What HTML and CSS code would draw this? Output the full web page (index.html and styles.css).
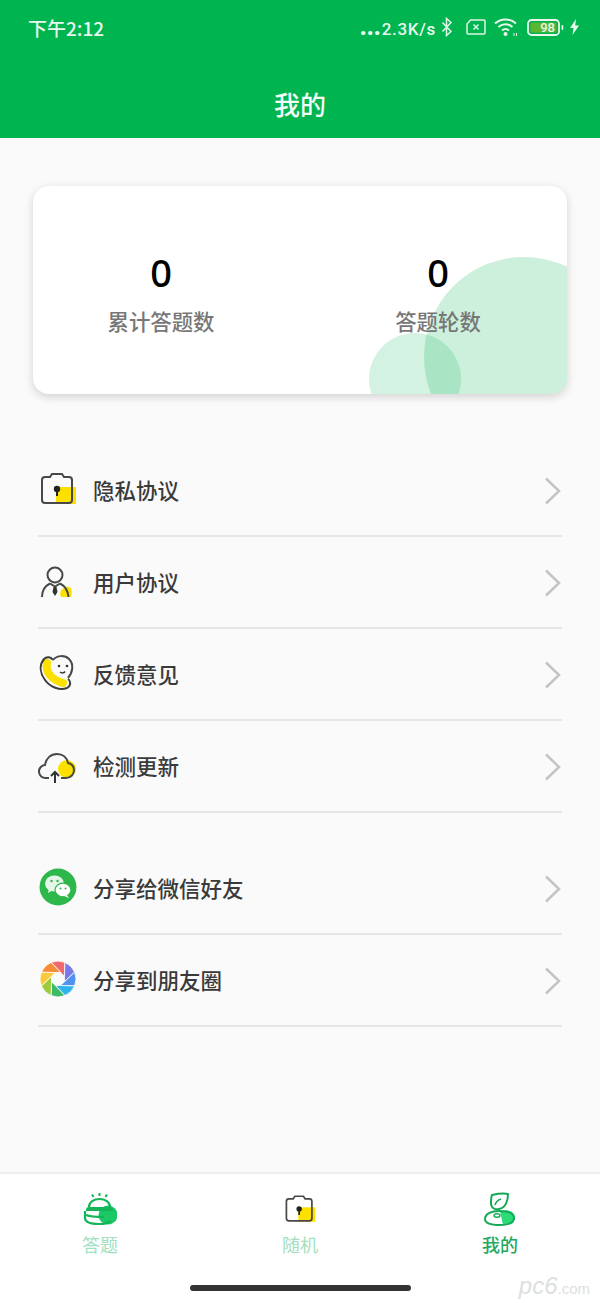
FILE: index.html
```html
<!DOCTYPE html>
<html lang="zh-CN">
<head>
    <meta charset="UTF-8">
    <meta name="viewport" content="width=device-width, initial-scale=1.0">
    <title>我的</title>
    <link rel="stylesheet" href="styles.css">
</head>
<body>
    <svg class="sprites" width="0" height="0">
        <symbol id="icon-lock" viewBox="0 0 40 40">
            <rect x="18" y="18" width="20" height="17" fill="#fbe000"/>
            <path d="M7 8h5l2-3h10l2 3h5a3 3 0 0 1 3 3v20a3 3 0 0 1-3 3H7a3 3 0 0 1-3-3V11a3 3 0 0 1 3-3z" fill="none" stroke="#484848" stroke-width="2"/>
            <circle cx="19" cy="20" r="3.2" fill="#222"/>
            <path d="M19 21v6" stroke="#222" stroke-width="2"/>
        </symbol>
    </svg>

    <header class="top-bar">
        <div class="status-bar">
            <span class="status-time">下午2:12</span>
            <div class="status-right">
                <span class="status-speed"><b class="status-dots">...</b>2.3K/s</span>
                <svg class="st-bt" width="12" height="20" viewBox="0 0 12 20"><path d="M1.5 5.5l8.5 9-4.5 4V1.5l4.500 4-8.500 9" fill="none" stroke="#dff5e7" stroke-width="1.500"/></svg>
                <svg class="st-sim" width="20" height="16" viewBox="0 0 20 16"><path d="M4.500 1H18a1 1 0 0 1 1 1v12a1 1 0 0 1-1 1H2a1 1 0 0 1-1-1V5z" fill="none" stroke="#dff5e7" stroke-width="1.500"/><path d="M7.500 5.500l5 5m0-5l-5 5" stroke="#dff5e7" stroke-width="1.500"/></svg>
                <svg class="st-wifi" width="25" height="20" viewBox="0 0 25 20"><path d="M1 6.500a15.500 15.500 0 0 1 21 0M4.500 10a10.500 10.500 0 0 1 14 0M8 13.500a5.500 5.500 0 0 1 7 0" fill="none" stroke="#e8f8ee" stroke-width="2"/><circle cx="11.500" cy="17" r="2" fill="#e8f8ee"/><path d="M20 16v3m2.500-3v3" stroke="#dff5e7" stroke-width="1"/></svg>
                <svg class="st-battery" width="37" height="17" viewBox="0 0 37 17"><rect x="1" y="1" width="31" height="15" rx="3.500" fill="none" stroke="#e8f8ee" stroke-width="1.800"/><rect x="3.500" y="3.500" width="26" height="10" rx="1.500" fill="#5cb531"/><rect x="34.500" y="6" width="1.800" height="5" rx=".9" fill="#e8f8ee"/></svg>
                <span class="battery-num">98</span>
                <svg class="st-bolt" width="11" height="16" viewBox="0 0 11 16"><path d="M7 0L1 9h3.500L3.500 16 10 6.500H6.200z" fill="#e8f8ee"/></svg>
            </div>
        </div>
        <h1 class="page-title">我的</h1>
    </header>

    <main class="content">
        <section class="stats-card">
            <span class="blob blob-big"></span>
            <span class="blob blob-small"></span>
            <div class="stat">
                <div class="stat-num">0</div>
                <div class="stat-label">累计答题数</div>
            </div>
            <div class="stat">
                <div class="stat-num">0</div>
                <div class="stat-label">答题轮数</div>
            </div>
        </section>

        <ul class="menu">
            <li class="menu-row">
                <svg class="row-icon" viewBox="0 0 40 40"><use href="#icon-lock"/></svg>
                <span class="row-text">隐私协议</span>
                <svg class="chevron" width="17" height="28" viewBox="0 0 17 28"><path d="M2 1.500L15 14 2 26.500" fill="none" stroke="#c4c4c4" stroke-width="2.500"/></svg>
            </li>
            <li class="menu-row">
                <svg class="row-icon" viewBox="0 0 40 40">
                    <path d="M23 36a7 7 0 0 1 10-9c1 3 1 6 0 9z" fill="#fbe000"/>
                    <circle cx="17" cy="14" r="7.500" fill="none" stroke="#484848" stroke-width="2"/>
                    <path d="M4 36c0-6 3-11 8-13.500M22 22.500c5 2.500 8 7.500 8.500 13.500M12 22.500l5 3 5-3" fill="none" stroke="#484848" stroke-width="2"/>
                    <path d="M15.500 26h3l1 5-2.500 4-2.500-4z" fill="#333"/>
                </svg>
                <span class="row-text">用户协议</span>
                <svg class="chevron" width="17" height="28" viewBox="0 0 17 28"><path d="M2 1.500L15 14 2 26.500" fill="none" stroke="#c4c4c4" stroke-width="2.500"/></svg>
            </li>
            <li class="menu-row">
                <svg class="row-icon" viewBox="0 0 40 40">
                    <path d="M9 10C7 18 13 27 25 30" fill="none" stroke="#fbe000" stroke-width="8" stroke-linecap="round"/>
                    <path d="M6 6c-5 6-4 14 1 21 5 7 15 11 22 8 4-2 4-7 1-9M6 6c3-3 7-2 9 1" fill="none" stroke="#3c3c3c" stroke-width="2"/>
                    <path d="M15 7c4-5 12-5 16-1 5 5 4 13-1 19" fill="none" stroke="#484848" stroke-width="2"/>
                    <circle cx="21" cy="13" r="1.300" fill="#333"/>
                    <circle cx="29" cy="13" r="1.300" fill="#333"/>
                    <path d="M22 19c2 1.500 4 1 5-.5" fill="none" stroke="#333" stroke-width="1.500"/>
                </svg>
                <span class="row-text">反馈意见</span>
                <svg class="chevron" width="17" height="28" viewBox="0 0 17 28"><path d="M2 1.500L15 14 2 26.500" fill="none" stroke="#c4c4c4" stroke-width="2.500"/></svg>
            </li>
            <li class="menu-row">
                <svg class="row-icon" viewBox="0 0 40 40">
                    <circle cx="29" cy="24" r="9" fill="#fbe000"/>
                    <path d="M11 33H8a6.500 6.500 0 0 1-1-13c1-7 6-11 12-11 6 0 10 4 11 9 4 1 6 4 6 7 0 4-3 8-8 8h-5" fill="none" stroke="#484848" stroke-width="2"/>
                    <path d="M17 38V27m-4 4l4-4 4 4" fill="none" stroke="#333" stroke-width="2"/>
                </svg>
                <span class="row-text">检测更新</span>
                <svg class="chevron" width="17" height="28" viewBox="0 0 17 28"><path d="M2 1.500L15 14 2 26.500" fill="none" stroke="#c4c4c4" stroke-width="2.500"/></svg>
            </li>
            <li class="menu-row row-share">
                <svg class="row-icon" viewBox="0 0 40 40">
                    <circle cx="20" cy="20" r="18.500" fill="#2eb84b"/>
                    <ellipse cx="16.500" cy="16.500" rx="9.500" ry="8" fill="#e4f6e7"/>
                    <path d="M11 21l-1 5 5-3z" fill="#e4f6e7"/>
                    <ellipse cx="25" cy="23" rx="8" ry="6.800" fill="#fff" stroke="#2eb84b" stroke-width="1.200"/>
                    <path d="M29 28l2 3-5-2z" fill="#fff"/>
                    <circle cx="13.500" cy="14" r="1.200" fill="#2eb84b"/>
                    <circle cx="19.500" cy="14" r="1.200" fill="#2eb84b"/>
                    <circle cx="22.500" cy="21.500" r="1" fill="#2eb84b"/>
                    <circle cx="27.500" cy="21.500" r="1" fill="#2eb84b"/>
                </svg>
                <span class="row-text">分享给微信好友</span>
                <svg class="chevron" width="17" height="28" viewBox="0 0 17 28"><path d="M2 1.500L15 14 2 26.500" fill="none" stroke="#c4c4c4" stroke-width="2.500"/></svg>
            </li>
            <li class="menu-row">
                <svg class="row-icon" viewBox="0 0 40 40">
                    <g stroke="#fff" stroke-width=".8">
                        <path d="M13.100 3.400A18 18 0 0 1 26.900 3.400L26.500 17.300 22.700 13.500z" fill="#ef6a6f"/>
                        <path d="M26.900 3.400A18 18 0 0 1 36.600 13.100L26.500 22.700 26.500 17.300z" fill="#7b78e8"/>
                        <path d="M36.600 13.100A18 18 0 0 1 36.600 26.900L22.700 26.500 26.500 22.700z" fill="#4f93ee"/>
                        <path d="M36.600 26.900A18 18 0 0 1 26.900 36.600L17.300 26.500 22.700 26.500z" fill="#2fb4ec"/>
                        <path d="M26.900 36.600A18 18 0 0 1 13.100 36.600L13.500 22.700 17.300 26.500z" fill="#3dbb6a"/>
                        <path d="M13.100 36.600A18 18 0 0 1 3.400 26.900L13.500 17.300 13.500 22.700z" fill="#9ccb3b"/>
                        <path d="M3.400 26.900A18 18 0 0 1 3.400 13.100L17.300 13.500 13.500 17.300z" fill="#f8c93a"/>
                        <path d="M3.400 13.100A18 18 0 0 1 13.100 3.400L22.700 13.500 17.300 13.500z" fill="#f58b35"/>
                    </g>
                </svg>
                <span class="row-text">分享到朋友圈</span>
                <svg class="chevron" width="17" height="28" viewBox="0 0 17 28"><path d="M2 1.500L15 14 2 26.500" fill="none" stroke="#c4c4c4" stroke-width="2.500"/></svg>
            </li>
        </ul>
    </main>

    <nav class="tab-bar">
        <div class="tabs">
            <div class="tab">
                <svg class="tab-icon" viewBox="0 0 34 34">
                    <circle cx="25" cy="23" r="9.500" fill="#1cc765"/>
                    <path d="M6 15c0-5 5-8 10.500-8S27 10 27 15" fill="none" stroke="#14b558" stroke-width="2.200"/>
                    <path d="M3 18c0-2 1-3 3-3h21c2 0 3 1 3 3v1H3z" fill="#14b558"/>
                    <path d="M2 19v7c0 4 6 6 14 6 5 0 9-1 12-3" fill="none" stroke="#14b558" stroke-width="2.200"/>
                    <path d="M3 23c5 2 12 2 18 2" fill="none" stroke="#14b558" stroke-width="2"/>
                    <path d="M16.500 1v3M9 2.500l1.500 2.500M24 2.500L22.500 5" stroke="#14b558" stroke-width="2"/>
                </svg>
                <span class="tab-label">答题</span>
            </div>
            <div class="tab">
                <svg class="tab-icon" viewBox="0 0 40 40"><use href="#icon-lock"/></svg>
                <span class="tab-label">随机</span>
            </div>
            <div class="tab tab-active">
                <svg class="tab-icon" viewBox="0 0 34 34">
                    <path d="M17 19c7-2 14 0 15 6 0 5-5 8-12 8z" fill="#2bdc78"/>
                    <path d="M9 3c5-1 11-2 16-1 0 6-2 14-9 15-4 1-8-1-8-6 0-3 0-6 1-8z" fill="none" stroke="#14a958" stroke-width="2"/>
                    <path d="M12 13c1-3 3-5 6-6" fill="none" stroke="#14a958" stroke-width="1.600"/>
                    <path d="M2 27c0-5 6-8 14-8s15 2 15 7c0 5-6 7-14 7S2 32 2 27z" fill="none" stroke="#14a958" stroke-width="2"/>
                    <ellipse cx="14" cy="23.500" rx="3" ry="1.800" fill="#fff" stroke="#14a958" stroke-width="1.400"/>
                </svg>
                <span class="tab-label">我的</span>
            </div>
        </div>
        <div class="home-line"></div>
        <div class="watermark"><span class="wm-logo">pc6</span><span class="wm-sub">.com</span></div>
    </nav>
</body>
</html>
```

FILE: styles.css
```css
* {
    box-sizing: border-box;
}
html, body {
    margin: 0;
    padding: 0;
}
body {
    width: 600px;
    height: 1303px;
    display: flex;
    flex-direction: column;
    overflow: hidden;
    background-color: #fafafa;
    font-family: "Noto Sans CJK SC", "Noto Sans", sans-serif;
}
.sprites {
    position: absolute;
}

/* green header */
.top-bar {
    height: 138px;
    flex-shrink: 0;
    background-color: #00b44f;
    color: #fff;
}
.status-bar {
    height: 54px;
    display: flex;
    align-items: center;
    justify-content: space-between;
    padding: 0 20px 0 28px;
}
.status-time {
    font-size: 19px;
    font-weight: 500;
    color: #e8f8ee;
}
.status-right {
    position: relative;
    display: flex;
    align-items: center;
    color: #e8f8ee;
}
.status-speed {
    font-family: Roboto, sans-serif;
    font-size: 17px;
    font-weight: 500;
    letter-spacing: .7px;
}
.status-dots {
    font-size: 23px;
    line-height: 1;
    font-weight: 900;
    letter-spacing: 0;
    margin-right: 1px;
}
.st-bt {
    margin-left: 5px;
}
.st-sim {
    margin-left: 13px;
}
.st-wifi {
    margin-left: 8px;
}
.st-battery {
    margin-left: 8px;
}
.st-bolt {
    margin-left: 5px;
}
.battery-num {
    position: absolute;
    right: 25px;
    top: 50%;
    transform: translateY(-50%);
    font-family: Roboto, sans-serif;
    font-size: 13px;
    font-weight: 500;
    color: #e8f8ee;
}
.page-title {
    margin: 0;
    text-align: center;
    font-size: 26px;
    font-weight: 500;
    line-height: 36px;
    padding-top: 32px;
    color: #f2fbf5;
}

/* main */
.content {
    flex: 1;
    padding: 48px 33px 0;
}
.stats-card {
    position: relative;
    height: 208px;
    display: grid;
    grid-template-columns: 214px 214px;
    justify-content: space-between;
    padding: 63px 22px 0 21px;
    background-color: #fff;
    border-radius: 16px;
    box-shadow: 0 3px 10px rgba(0, 0, 0, .16);
    overflow: hidden;
}
.blob {
    position: absolute;
    border-radius: 50%;
    background-color: rgba(0, 179, 79, .2);
}
.blob-big {
    left: 391px;
    top: 71px;
    width: 200px;
    height: 200px;
}
.blob-small {
    left: 336px;
    top: 147px;
    width: 92px;
    height: 92px;
    background-color: rgba(0, 179, 79, .17);
}
.stat {
    position: relative;
    text-align: center;
}
.stat-num {
    font-family: "Noto Sans", sans-serif;
    font-size: 38px;
    font-weight: 500;
    line-height: 46px;
    color: #000;
}
.stat-label {
    margin-top: 11px;
    font-size: 21.400px;
    font-weight: 500;
    line-height: 30px;
    color: #777;
}

.menu {
    list-style: none;
    margin: 51px 5px 0;
    padding: 0;
}
.menu-row {
    height: 92px;
    display: flex;
    align-items: center;
    padding-bottom: 2px;
    border-bottom: 2px solid #e6e6e6;
}
.row-share {
    margin-top: 30px;
}
.row-icon {
    width: 40px;
    height: 40px;
    flex-shrink: 0;
}
.row-text {
    flex: 1;
    margin-left: 15px;
    font-size: 21.500px;
    font-weight: 500;
    color: #3a3a3a;
}
.chevron {
    margin-right: 1px;
    margin-top: 4px;
}

/* bottom tabs */
.tab-bar {
    position: relative;
    height: 131px;
    flex-shrink: 0;
    background-color: #fff;
    border-top: 2px solid #eee;
}
.tabs {
    display: grid;
    grid-template-columns: repeat(3, 1fr);
    padding-top: 18px;
}
.tab {
    display: flex;
    flex-direction: column;
    align-items: center;
}
.tab-icon {
    width: 34px;
    height: 34px;
}
.tab-label {
    margin-top: 4px;
    font-size: 18px;
    line-height: 28px;
    color: #a3dfc0;
}
.tab-active .tab-label {
    color: #23a862;
    font-weight: 500;
}
.home-line {
    width: 221px;
    height: 6px;
    margin: 27px auto 0;
    border-radius: 3px;
    background-color: #333;
}
.watermark {
    position: absolute;
    right: 10px;
    bottom: 5px;
    display: flex;
    align-items: flex-end;
    color: #dcdfe1;
    font-family: "Liberation Sans", sans-serif;
}
.wm-logo {
    font-size: 24px;
    font-style: italic;
    line-height: 24px;
}
.wm-sub {
    font-size: 15px;
    line-height: 18px;
}
```
